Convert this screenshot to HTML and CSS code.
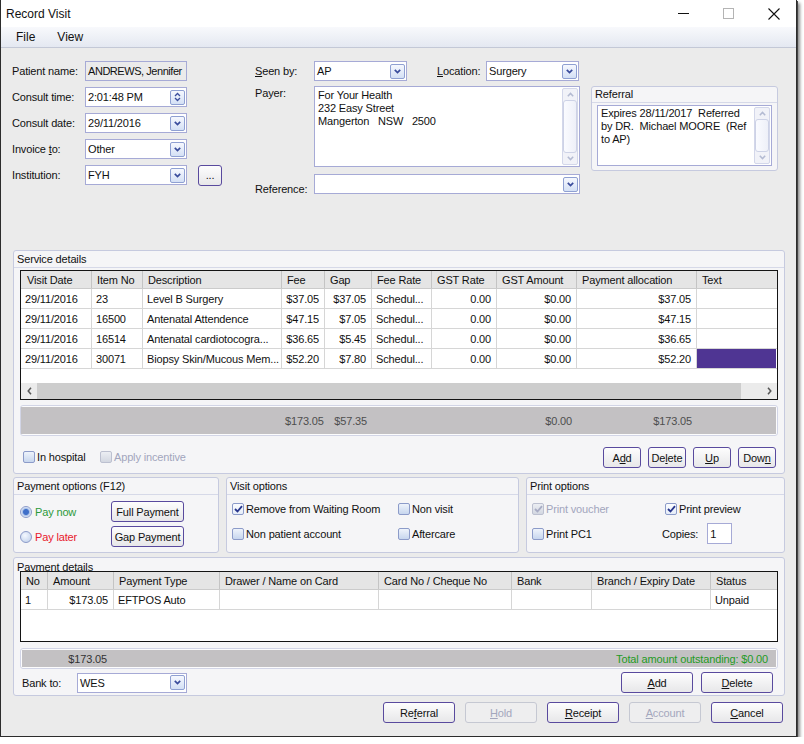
FILE: index.html
```html
<!DOCTYPE html>
<html lang="en">
<head>
  <meta charset="UTF-8" />
  <title>Record Visit</title>
  <link rel="stylesheet" href="styles.css">
</head>
<body>
<div class="window">
  <div class="titlebar">
    <span class="title">Record Visit</span>
    <span class="wc"><svg width="11" height="11" viewBox="0 0 11 11"><path d="M0 5.5h11" stroke="#111" stroke-width="1"/></svg></span>
    <span class="wc"><svg width="11" height="11" viewBox="0 0 11 11"><rect x="0.5" y="0.5" width="10" height="10" fill="none" stroke="#b4b4b4"/></svg></span>
    <span class="wc"><svg width="12" height="12" viewBox="0 0 12 12"><path d="M0.5 0.5l11 11M11.5 0.5l-11 11" stroke="#111" stroke-width="1.1"/></svg></span>
  </div>
  <div class="menubar"><span>File</span><span>View</span></div>

  <div class="content">
    <!-- visit header fields -->
    <div class="top">
      <div class="fields">
        <div class="row"><span class="lbl">Patient name:</span><span class="box ro">ANDREWS, Jennifer</span></div>
        <div class="row"><span class="lbl">Consult time:</span>
          <span class="box combo"><span class="val">2:01:48 PM</span><span class="drop"><svg width="7" height="10" viewBox="0 0 7 10"><path d="M1 4L3.5 1.5L6 4M1 6L3.5 8.5L6 6" stroke="#3a4c9c" stroke-width="1.3" fill="none"/></svg></span></span></div>
        <div class="row"><span class="lbl">Consult date:</span>
          <span class="box combo"><span class="val">29/11/2016</span><span class="drop"><svg width="7" height="5" viewBox="0 0 7 5"><path d="M0.8 0.8L3.5 3.6L6.2 0.8" stroke="#3a4c9c" stroke-width="1.7" fill="none"/></svg></span></span></div>
        <div class="row"><span class="lbl">Invoice <u>t</u>o:</span>
          <span class="box combo"><span class="val">Other</span><span class="drop"><svg width="7" height="5" viewBox="0 0 7 5"><path d="M0.8 0.8L3.5 3.6L6.2 0.8" stroke="#3a4c9c" stroke-width="1.7" fill="none"/></svg></span></span></div>
        <div class="row"><span class="lbl">Institution:</span>
          <span class="box combo"><span class="val">FYH</span><span class="drop"><svg width="7" height="5" viewBox="0 0 7 5"><path d="M0.8 0.8L3.5 3.6L6.2 0.8" stroke="#3a4c9c" stroke-width="1.7" fill="none"/></svg></span></span>
          <span class="btn dots">...</span></div>
      </div>

      <div class="mid">
        <div class="row">
          <span class="lbl"><u>S</u>een by:</span>
          <span class="box combo w93"><span class="val">AP</span><span class="drop"><svg width="7" height="5" viewBox="0 0 7 5"><path d="M0.8 0.8L3.5 3.6L6.2 0.8" stroke="#3a4c9c" stroke-width="1.7" fill="none"/></svg></span></span>
          <span class="lbl loc"><u>L</u>ocation:</span>
          <span class="box combo w93"><span class="val">Surgery</span><span class="drop"><svg width="7" height="5" viewBox="0 0 7 5"><path d="M0.8 0.8L3.5 3.6L6.2 0.8" stroke="#3a4c9c" stroke-width="1.7" fill="none"/></svg></span></span>
        </div>
        <div class="row payer">
          <span class="lbl">Payer:</span>
          <div class="memo">
            <div class="memo-text">For Your Health<br>232 Easy Street<br>Mangerton&nbsp;&nbsp; NSW&nbsp;&nbsp; 2500</div>
            <div class="vscroll">
              <span class="arr"><svg width="7" height="5" viewBox="0 0 7 5"><path d="M0.8 4.2L3.5 1.4L6.2 4.2" stroke="#b3bad2" stroke-width="1.5" fill="none"/></svg></span>
              <span class="thumb"></span>
              <span class="arr"><svg width="7" height="5" viewBox="0 0 7 5"><path d="M0.8 0.8L3.5 3.6L6.2 0.8" stroke="#b3bad2" stroke-width="1.5" fill="none"/></svg></span>
            </div>
          </div>
        </div>
        <div class="row ref">
          <span class="lbl">Reference:</span>
          <span class="box combo w266"><span class="val"></span><span class="drop"><svg width="7" height="5" viewBox="0 0 7 5"><path d="M0.8 0.8L3.5 3.6L6.2 0.8" stroke="#3a4c9c" stroke-width="1.7" fill="none"/></svg></span></span>
        </div>
      </div>

      <div class="group referral">
        <div class="gtitle">Referral</div>
        <div class="memo ref-memo">
          <div class="memo-text">Expires 28/11/2017&nbsp; Referred by DR.&nbsp; Michael MOORE&nbsp; (Ref to AP)</div>
          <div class="vscroll">
            <span class="arr"><svg width="7" height="5" viewBox="0 0 7 5"><path d="M0.8 4.2L3.5 1.4L6.2 4.2" stroke="#b3bad2" stroke-width="1.5" fill="none"/></svg></span>
            <span class="thumb"></span>
            <span class="arr"><svg width="7" height="5" viewBox="0 0 7 5"><path d="M0.8 0.8L3.5 3.6L6.2 0.8" stroke="#b3bad2" stroke-width="1.5" fill="none"/></svg></span>
          </div>
        </div>
      </div>
    </div>

    <!-- services -->
    <div class="group service">
      <div class="gtitle">Service details</div>
      <div class="gbody">
        <div class="tbl svc">
          <div class="thead">
            <span>Visit Date</span><span>Item No</span><span>Description</span><span>Fee</span><span>Gap</span><span>Fee Rate</span><span>GST Rate</span><span>GST Amount</span><span>Payment allocation</span><span>Text</span>
          </div>
          <div class="tr"><span>29/11/2016</span><span>23</span><span>Level B Surgery</span><span class="r">$37.05</span><span class="r">$37.05</span><span>Schedul...</span><span class="r">0.00</span><span class="r">$0.00</span><span class="r">$37.05</span><span></span></div>
          <div class="tr"><span>29/11/2016</span><span>16500</span><span>Antenatal Attendence</span><span class="r">$47.15</span><span class="r">$7.05</span><span>Schedul...</span><span class="r">0.00</span><span class="r">$0.00</span><span class="r">$47.15</span><span></span></div>
          <div class="tr"><span>29/11/2016</span><span>16514</span><span>Antenatal cardiotocogra...</span><span class="r">$36.65</span><span class="r">$5.45</span><span>Schedul...</span><span class="r">0.00</span><span class="r">$0.00</span><span class="r">$36.65</span><span></span></div>
          <div class="tr"><span>29/11/2016</span><span>30071</span><span>Biopsy Skin/Mucous Mem...</span><span class="r">$52.20</span><span class="r">$7.80</span><span>Schedul...</span><span class="r">0.00</span><span class="r">$0.00</span><span class="r">$52.20</span><span class="sel"></span></div>
          <div class="tspace"></div>
          <div class="hscroll">
            <span class="hbtn"><svg width="5" height="8" viewBox="0 0 5 8"><path d="M4 0.8L1.2 4L4 7.2" stroke="#555" stroke-width="1.5" fill="none"/></svg></span>
            <span class="hthumb"></span>
            <span class="hbtn end"><svg width="5" height="8" viewBox="0 0 5 8"><path d="M1 0.8L3.8 4L1 7.2" stroke="#555" stroke-width="1.5" fill="none"/></svg></span>
          </div>
        </div>

        <div class="totals big">
          <div class="tot-in svc">
            <span></span><span></span><span></span><span class="r">$173.05</span><span class="r">$57.35</span><span></span><span></span><span class="r">$0.00</span><span class="r">$173.05</span><span></span>
          </div>
        </div>

        <div class="svc-foot">
          <label class="chk first"><span class="cb"></span>In hospital</label>
          <label class="chk dis"><span class="cb"></span>Apply incentive</label>
          <div class="btns">
            <span class="btn sm">A<u>d</u>d</span>
            <span class="btn sm">De<u>l</u>ete</span>
            <span class="btn sm"><u>U</u>p</span>
            <span class="btn sm">Dow<u>n</u></span>
          </div>
        </div>
      </div>
    </div>

    <!-- option groups -->
    <div class="opts">
      <div class="group payopt">
        <div class="gtitle">Payment options (F12)</div>
        <div class="pay-grid">
          <label class="chk green"><span class="rb on"></span>Pay now</label>
          <span class="btn">Full Payment</span>
          <label class="chk red"><span class="rb"></span>Pay later</label>
          <span class="btn">Gap Payment</span>
        </div>
      </div>
      <div class="group visitopt">
        <div class="gtitle">Visit options</div>
        <div class="opt-grid visit">
          <label class="chk"><span class="cb on"><svg width="9" height="8" viewBox="0 0 9 8"><path d="M1 4L3.5 6.5L8 1.2" stroke="#27358c" stroke-width="1.8" fill="none"/></svg></span>Remove from Waiting Room</label>
          <label class="chk"><span class="cb"></span>Non visit</label>
          <label class="chk"><span class="cb"></span>Non patient account</label>
          <label class="chk"><span class="cb"></span>Aftercare</label>
        </div>
      </div>
      <div class="group printopt">
        <div class="gtitle">Print options</div>
        <div class="opt-grid print">
          <label class="chk dis"><span class="cb on"><svg width="9" height="8" viewBox="0 0 9 8"><path d="M1 4L3.5 6.5L8 1.2" stroke="#a8acc4" stroke-width="1.8" fill="none"/></svg></span>Print voucher</label>
          <label class="chk"><span class="cb on"><svg width="9" height="8" viewBox="0 0 9 8"><path d="M1 4L3.5 6.5L8 1.2" stroke="#27358c" stroke-width="1.8" fill="none"/></svg></span>Print preview</label>
          <label class="chk"><span class="cb"></span>Print PC1</label>
          <div class="copies"><span>Copies:</span><span class="box num">1</span></div>
        </div>
      </div>
    </div>

    <!-- payments -->
    <div class="group payments">
      <div class="gtitle short">Payment details</div>
      <div class="gbody">
        <div class="tbl pay">
          <div class="thead">
            <span>No</span><span>Amount</span><span>Payment Type</span><span>Drawer / Name on Card</span><span>Card No / Cheque No</span><span>Bank</span><span>Branch / Expiry Date</span><span>Status</span>
          </div>
          <div class="tr"><span>1</span><span class="r">$173.05</span><span>EFTPOS Auto</span><span></span><span></span><span></span><span></span><span>Unpaid</span></div>
        </div>

        <div class="totals small">
          <div class="tot-in flat">
            <span class="paid">$173.05</span>
            <span class="outstanding">Total amount outstanding: $0.00</span>
          </div>
        </div>

        <div class="bank-row">
          <span class="lbl">Bank to:</span>
          <span class="box combo w110"><span class="val">WES</span><span class="drop"><svg width="7" height="5" viewBox="0 0 7 5"><path d="M0.8 0.8L3.5 3.6L6.2 0.8" stroke="#3a4c9c" stroke-width="1.7" fill="none"/></svg></span></span>
          <div class="btns">
            <span class="btn wide"><u>A</u>dd</span>
            <span class="btn wide"><u>D</u>elete</span>
          </div>
        </div>
      </div>
    </div>

    <div class="actions">
      <span class="btn wide">Re<u>f</u>erral</span>
      <span class="btn wide dis"><u>H</u>old</span>
      <span class="btn wide"><u>R</u>eceipt</span>
      <span class="btn wide dis"><u>A</u>ccount</span>
      <span class="btn wide"><u>C</u>ancel</span>
    </div>
  </div>
</div>
</body>
</html>
```

FILE: styles.css
```css
* {
  box-sizing: border-box;
}

html, body {
  margin: 0;
  padding: 0;
  background: #fff;
}

body {
  font-family: "Liberation Sans", Arial, sans-serif;
  font-size: 11px;
  letter-spacing: -0.15px;
  color: #111;
}

u {
  text-decoration: underline;
  text-underline-offset: 1px;
}

/* window chrome */
.window {
  width: 797px;
  height: 737px;
  background: #ebebeb;
  border: 1px solid #2c2c2c;
  border-top: 0;
  box-shadow: 1px 1px 0 #444, 3px 3px 3px rgba(0,0,0,0.45);
  display: flex;
  flex-direction: column;
}

.titlebar {
  height: 27px;
  background: #fff;
  display: flex;
  align-items: center;
  padding-left: 5px;
  font-size: 12px;
  letter-spacing: 0;
}
.title { flex: 1; }
.wc {
  width: 45px;
  height: 27px;
  display: flex;
  align-items: center;
  justify-content: center;
}

.menubar {
  height: 21px;
  background: linear-gradient(#f8f9fc, #e4e8f1);
  border-bottom: 1px solid #c3c8d6;
  display: flex;
  align-items: center;
  padding-left: 15px;
  font-size: 12px;
  letter-spacing: 0;
}
.menubar span { margin-right: 22px; }

.content {
  flex: 1;
}

/* inputs */
.box {
  height: 20px;
  width: 102px;
  border: 1px solid #a6aad6;
  background: #fff;
  padding: 0 2px;
  display: flex;
  align-items: center;
  white-space: nowrap;
  overflow: hidden;
}
.box.ro {
  background: #ebebeb;
  letter-spacing: -0.45px;
}
.combo { padding-right: 0; }
.combo .val { flex: 1; }
.drop {
  width: 15px;
  height: 15px;
  margin-right: 1px;
  border: 1px solid #8fa0d2;
  border-radius: 2px;
  background: linear-gradient(#f6f8fe, #d4e0f5);
  display: flex;
  align-items: center;
  justify-content: center;
}
.w93 { width: 93px; }
.w110 { width: 110px; }
.w266 { width: 266px; }

/* top fields */
.top {
  height: 202px;
  display: flex;
  align-items: flex-start;
  padding: 13px 0 0 11px;
}
.row {
  display: flex;
  align-items: center;
  height: 20px;
}
.fields {
  width: 243px;
  display: flex;
  flex-direction: column;
  gap: 6px;
}
.fields .lbl { width: 73px; }

.dots {
  width: 24px;
  height: 18px;
  margin-left: 11px;
  line-height: 12px;
}

.mid { width: 325px; }
.mid .lbl { width: 59px; }
.mid .lbl.loc { width: 49px; margin-left: 30px; }
.row.payer {
  height: 81px;
  margin-top: 5px;
  align-items: flex-start;
}
.row.payer .lbl { padding-top: 1px; }
.row.ref {
  margin-top: 7px;
}
.row.ref .lbl { padding-top: 10px; }

.memo {
  display: flex;
  border: 1px solid #a6aad6;
  background: #fff;
}
.row.payer .memo {
  width: 266px;
  height: 81px;
}
.memo-text {
  flex: 1;
  padding: 2px 3px;
  line-height: 13px;
}
.vscroll {
  width: 16px;
  margin: 1px 1px 1px 0;
  border: 1px solid #d3d7ea;
  border-radius: 2px;
  background: #f1f2f8;
  display: flex;
  flex-direction: column;
  align-items: center;
}
.vscroll .arr {
  height: 11px;
  display: flex;
  align-items: center;
}
.vscroll .thumb {
  flex: 1;
  width: 14px;
  border: 1px solid #cdd2e6;
  border-radius: 3px;
  background: linear-gradient(90deg, #fafbff, #eef0f8);
}

/* groups */
.group {
  border: 1px solid #c6cadf;
  border-radius: 3px;
  background: #f5f5f7;
}
.gtitle {
  height: 17px;
  line-height: 16px;
  padding-left: 3px;
  border-bottom: 1px solid #d6d9e8;
  white-space: nowrap;
}
.gtitle.short {
  height: 13px;
  line-height: 18px;
  border-bottom: 0;
}

.referral {
  width: 187px;
  height: 85px;
  margin: 25px 0 0 11px;
}
.referral .gtitle { height: 16px; line-height: 15px; }
.ref-memo {
  margin: 2px 5px 0;
  height: 61px;
}
.ref-memo .memo-text { padding: 1px 3px; }

.service {
  width: 772px;
  height: 224px;
  margin-left: 12px;
}
.gbody { padding: 2px 6px 0; }

/* grids */
.tbl {
  position: relative;
  border: 1px solid #141414;
  background: #fff;
}
.thead, .tr, .tot-in.svc {
  display: grid;
}
.tbl.svc .thead,
.tbl.svc .tr,
.tot-in.svc {
  grid-template-columns: 71px 51px 139px 43px 47px 60px 65px 80px 120px 79px;
}
.tbl.pay .thead,
.tbl.pay .tr {
  grid-template-columns: 27px 66px 106px 159px 133px 80px 119px 65px;
}
.thead {
  height: 18px;
  background: #e5e5e5;
  border-bottom: 1px solid #cbcbcb;
}
.thead span {
  padding-left: 5px;
  line-height: 19px;
  border-right: 1px solid #c4c4c4;
  white-space: nowrap;
  overflow: hidden;
}
.tbl.svc .thead span:first-child { padding-left: 6px; }
.tr {
  height: 20px;
  border-bottom: 1px solid #d6d6d6;
}
.tr span {
  padding: 0 4px;
  line-height: 20px;
  border-right: 1px solid #d6d6d6;
  white-space: nowrap;
  overflow: hidden;
}
.tr span:last-child,
.thead span:last-child { border-right: 0; }
.r { text-align: right; padding-right: 5px !important; }
.tr .sel { background: #4f3593; }

.tbl.svc { height: 130px; }
.tspace { height: 14px; }
.hscroll {
  height: 16px;
  display: flex;
  background: #ebebeb;
}
.hbtn {
  width: 16px;
  display: flex;
  align-items: center;
  justify-content: center;
}
.hbtn.end {
  width: 36px;
  justify-content: flex-end;
  padding-right: 5px;
}
.hthumb {
  flex: 1;
  background: #cdcdcd;
}

.tbl.pay { height: 71px; }

.totals {
  border: 1px solid #d2d5e6;
  border-radius: 3px;
  padding: 1px;
  background: #fcfcfd;
}
.totals.big {
  height: 31px;
  margin-top: 5px;
}
.totals.small {
  height: 21px;
  margin-top: 6px;
}
.tot-in {
  height: 100%;
  background: #c3c1c3;
  color: #4e4e4e;
  align-items: center;
}
.tot-in.svc { margin-left: -1px; }
.tot-in.svc span { padding: 0 3px; }
.tot-in.flat {
  display: flex;
  align-items: center;
}
.paid {
  width: 85px;
  text-align: right;
  color: #333;
}
.outstanding {
  margin-left: auto;
  padding-right: 8px;
  color: #1f9a24;
}

/* checks and radios */
.chk {
  display: flex;
  align-items: center;
  white-space: nowrap;
}
.cb {
  width: 12px;
  height: 12px;
  margin-right: 2px;
  border: 1px solid #8c9bc9;
  border-radius: 2px;
  background: linear-gradient(#eef3fb, #c7d6ee);
  display: flex;
  align-items: center;
  justify-content: center;
}
.cb.on { background: linear-gradient(#fbfcff, #e6edf8); }
.chk.dis { color: #a2a5bd; }
.chk.dis .cb {
  border-color: #bcc0d0;
  background: linear-gradient(#eceef3, #d3d7e1);
}
.rb {
  width: 12px;
  height: 12px;
  margin-right: 3px;
  border: 1px solid #8c9bc9;
  border-radius: 50%;
  background: radial-gradient(circle at 40% 35%, #f4f8ff, #bccde9);
}
.rb.on {
  background: radial-gradient(circle, #3f6fc9 0 2.5px, #a9c0e8 3.5px, #e6eefb 5px);
}
.chk.green { color: #2b9a3a; }
.chk.red { color: #e8192c; }

.svc-foot {
  display: flex;
  align-items: center;
  height: 21px;
  margin-top: 11px;
}
.svc-foot .chk { padding-bottom: 2px; }
.svc-foot .first { margin-left: 3px; width: 77px; }
.btns {
  margin-left: auto;
  display: flex;
  gap: 8px;
}
.svc-foot .btns { gap: 7px; margin-right: 2px; }

/* buttons */
.btn {
  height: 21px;
  border: 1px solid #594a9e;
  border-radius: 3px;
  background: linear-gradient(#fdfdfd, #e7e7e9);
  display: flex;
  align-items: center;
  justify-content: center;
  white-space: nowrap;
}
.btn.sm { width: 38px; }
.btn.wide { width: 72px; }
.btn.dis {
  border-color: #c5c8d2;
  background: #eeeeef;
  color: #a4a7bd;
}

/* options */
.opts {
  display: flex;
  gap: 7px;
  margin: 3px 0 0 12px;
}
.opts .group { height: 76px; }
.payopt { width: 206px; }
.visitopt { width: 293px; }
.printopt { width: 259px; }

.pay-grid {
  display: grid;
  grid-template-columns: 91px 73px;
  grid-auto-rows: 21px;
  row-gap: 4px;
  padding: 6px 0 0 6px;
}
.pay-grid .chk { padding-top: 1px; }

.opt-grid {
  display: grid;
  grid-auto-rows: 21px;
  row-gap: 4px;
  padding: 3px 0 0 5px;
}
.opt-grid.visit { grid-template-columns: 166px 1fr; }
.opt-grid.print { grid-template-columns: 133px 1fr; }
.copies {
  display: flex;
  align-items: center;
  margin-left: -3px;
}
.copies .box.num {
  width: 25px;
  height: 21px;
  margin-left: 9px;
}

/* payments */
.payments {
  width: 772px;
  height: 139px;
  margin: 4px 0 0 12px;
}
.payments .gbody { padding-top: 0; }
.bank-row {
  display: flex;
  align-items: center;
  height: 21px;
  margin-top: 3px;
  padding-left: 2px;
}
.bank-row .lbl { width: 55px; }
.bank-row .btns { margin-right: 5px; }

.actions {
  display: flex;
  justify-content: flex-end;
  gap: 10px;
  margin-top: 6px;
  padding-right: 13px;
}
```
